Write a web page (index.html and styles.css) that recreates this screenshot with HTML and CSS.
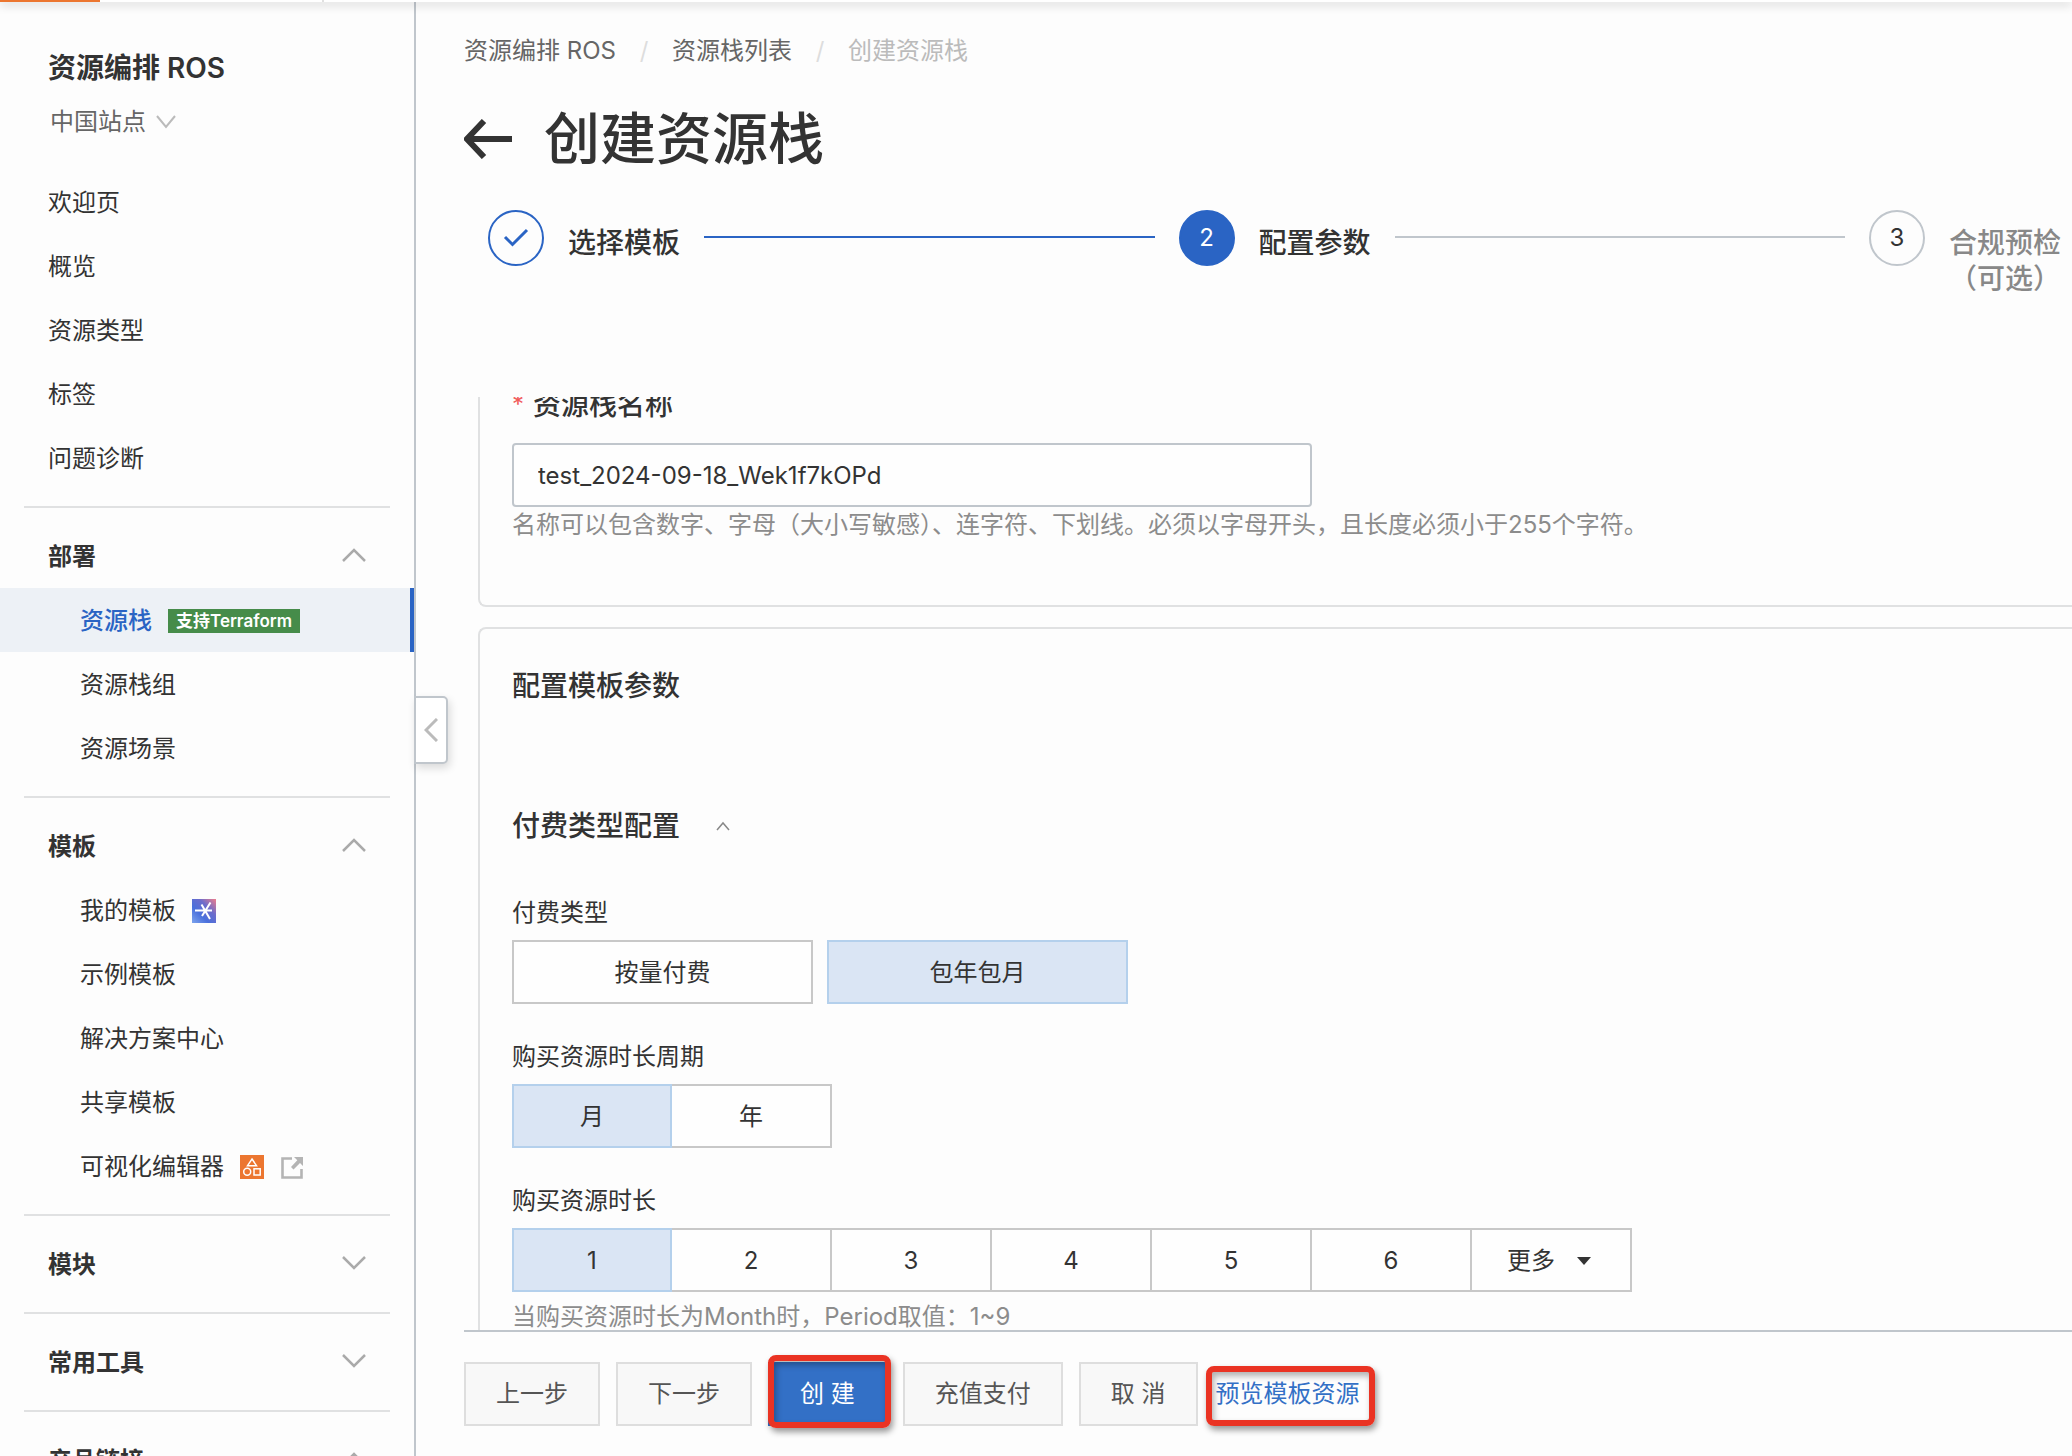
FILE: index.html
```html
<!DOCTYPE html>
<html lang="zh-CN">
<head>
<meta charset="utf-8">
<title>创建资源栈 - 资源编排 ROS</title>
<meta name="viewport" content="width=device-width, initial-scale=1">
<link rel="stylesheet" href="styles.css">
</head>
<body>
<div class="topbar"><span class="topbar-brand"></span><span class="topbar-divider"></span></div>
<div class="shell">
  <aside class="sidebar">
    <h2 class="product">资源编排 ROS</h2>
    <button class="site" type="button">中国站点
      <svg width="20" height="14" viewBox="0 0 20 14"><path d="M1 1L10 12L19 1"/></svg>
    </button>
    <nav class="menu">
      <ul class="group">
        <li><a class="item" href="#">欢迎页</a></li>
        <li><a class="item" href="#">概览</a></li>
        <li><a class="item" href="#">资源类型</a></li>
        <li><a class="item" href="#">标签</a></li>
        <li><a class="item" href="#">问题诊断</a></li>
      </ul>
      <section class="group">
        <button class="item group-title" type="button">部署
          <svg class="chevron" width="24" height="14" viewBox="0 0 24 14"><path d="M1 13L12 2L23 13"/></svg>
        </button>
        <ul>
          <li><a class="item sub active" href="#" aria-current="page">资源栈<span class="badge">支持Terraform</span></a></li>
          <li><a class="item sub" href="#">资源栈组</a></li>
          <li><a class="item sub" href="#">资源场景</a></li>
        </ul>
      </section>
      <section class="group">
        <button class="item group-title" type="button">模板
          <svg class="chevron" width="24" height="14" viewBox="0 0 24 14"><path d="M1 13L12 2L23 13"/></svg>
        </button>
        <ul>
          <li><a class="item sub" href="#">我的模板
            <svg width="24" height="24" viewBox="0 0 24 24">
              <defs>
                <linearGradient id="spark" x1="0" y1="1" x2="1" y2="0">
                  <stop offset="0" stop-color="#7da4ee"/><stop offset=".35" stop-color="#4a70dc"/><stop offset=".65" stop-color="#6d6ccb"/><stop offset="1" stop-color="#ef7d8c"/>
                </linearGradient>
              </defs>
              <rect width="24" height="24" fill="url(#spark)"/>
              <path d="M3 11.500H20M9.500 5.500L18 20M18.500 3.500L10 17" fill="none" stroke="#fff" stroke-width="2"/>
            </svg></a></li>
          <li><a class="item sub" href="#">示例模板</a></li>
          <li><a class="item sub" href="#">解决方案中心</a></li>
          <li><a class="item sub" href="#">共享模板</a></li>
          <li><a class="item sub" href="#">可视化编辑器
            <svg width="24" height="24" viewBox="0 0 24 24">
              <rect width="24" height="24" fill="#ec7630"/>
              <g fill="none" stroke="#fff" stroke-width="1.500"><path d="M12 4L16.500 10.700H7.500Z"/><circle cx="7.200" cy="16.800" r="3.500"/><rect x="14" y="13.800" width="6.200" height="6.200"/></g>
            </svg>
            <svg width="24" height="24" viewBox="0 0 24 24">
              <path d="M12 3.500H2.500V22.500H21.500V14" fill="none" stroke="#b4b4b4" stroke-width="2.600"/>
              <path d="M14 2H23V11L20 8L13.500 14.500L11 12L17.300 5.300Z" fill="#b4b4b4"/>
            </svg></a></li>
        </ul>
      </section>
      <section class="group">
        <button class="item group-title" type="button">模块
          <svg class="chevron" width="24" height="14" viewBox="0 0 24 14"><path d="M1 1L12 12L23 1"/></svg>
        </button>
      </section>
      <section class="group">
        <button class="item group-title" type="button">常用工具
          <svg class="chevron" width="24" height="14" viewBox="0 0 24 14"><path d="M1 1L12 12L23 1"/></svg>
        </button>
      </section>
      <section class="group">
        <button class="item group-title" type="button">产品链接
          <svg class="chevron" width="24" height="14" viewBox="0 0 24 14"><path d="M1 13L12 2L23 13"/></svg>
        </button>
      </section>
    </nav>
  </aside>
  <button class="collapse" type="button" aria-label="收起">
    <svg width="14" height="24" viewBox="0 0 14 24"><path d="M13 1L2 12L13 23"/></svg>
  </button>

  <main class="main">
    <nav class="crumbs">
      <a href="#">资源编排 ROS</a><span class="slash">/</span><a href="#">资源栈列表</a><span class="slash">/</span><span class="here">创建资源栈</span>
    </nav>
    <header class="title">
      <a class="back" href="#" aria-label="返回">
        <svg width="50" height="40" viewBox="0 0 50 40"><path d="M20 2L3 20L20 38M3 20H48"/></svg>
      </a>
      <h1>创建资源栈</h1>
    </header>
    <ol class="steps">
      <li class="step done">
        <span class="dot"><svg width="26" height="20" viewBox="0 0 26 20"><path d="M2 9L9.500 16.500L24 2"/></svg></span>
        <span class="step-label">选择模板</span>
      </li>
      <li class="step current"><span class="dot">2</span><span class="step-label">配置参数</span></li>
      <li class="step"><span class="dot">3</span><span class="step-label">合规预检<br>（可选）</span></li>
    </ol>

    <form class="form">
      <div class="scroll">
        <section class="card name-card">
          <label class="heading name-label" for="stack-name"><span class="required">*</span>资源栈名称</label>
          <input class="text" id="stack-name" type="text" value="test_2024-09-18_Wek1f7kOPd">
          <p class="help">名称可以包含数字、字母（大小写敏感）、连字符、下划线。必须以字母开头，且长度必须小于255个字符。</p>
        </section>
        <section class="card params-card">
          <h2 class="heading">配置模板参数</h2>
          <h3 class="heading section-heading">付费类型配置
            <svg width="14" height="10" viewBox="0 0 14 10"><path d="M1 9L7 2L13 9"/></svg>
          </h3>
          <div class="field" role="group" aria-labelledby="pay">
            <span class="field-label" id="pay">付费类型</span>
            <div class="choices spaced">
              <button type="button" aria-pressed="false">按量付费</button>
              <button type="button" aria-pressed="true">包年包月</button>
            </div>
          </div>
          <div class="field" role="group" aria-labelledby="unit">
            <span class="field-label" id="unit">购买资源时长周期</span>
            <div class="choices">
              <button type="button" aria-pressed="true">月</button>
              <button type="button" aria-pressed="false">年</button>
            </div>
          </div>
          <div class="field" role="group" aria-labelledby="period">
            <span class="field-label" id="period">购买资源时长</span>
            <div class="choices">
              <button type="button" aria-pressed="true">1</button>
              <button type="button" aria-pressed="false">2</button>
              <button type="button" aria-pressed="false">3</button>
              <button type="button" aria-pressed="false">4</button>
              <button type="button" aria-pressed="false">5</button>
              <button type="button" aria-pressed="false">6</button>
              <button class="more" type="button" aria-haspopup="true">更多<svg width="14" height="8" viewBox="0 0 14 8"><path d="M0 0H14L7 8Z" fill="#333"/></svg></button>
            </div>
            <p class="help">当购买资源时长为Month时，Period取值：1~9</p>
          </div>
        </section>
      </div>
      <footer class="actions">
        <button class="btn" type="button">上一步</button>
        <button class="btn" type="button">下一步</button>
        <span class="marked mark-create"><button class="btn primary" type="submit">创 建</button></span>
        <button class="btn" type="button">充值支付</button>
        <button class="btn" type="button">取 消</button>
        <span class="marked mark-link"><a class="btn link" href="#">预览模板资源</a></span>
      </footer>
    </form>
  </main>
</div>
</body>
</html>
```
FILE: styles.css
```css
:root {
  --text: #333;
  --muted: #8c8c8c;
  --blue: #2a64c4;
  --line: #e0e1e2;
  --edge: #c0c6cc;
  --page: #fdfdfd;
}

* { box-sizing: border-box; }

body {
  margin: 0;
  background: var(--page);
  color: var(--text);
  font: 24px/36px Inter, "Noto Sans CJK SC", sans-serif;
}

h1, h2, h3, p, ul, ol { margin: 0; padding: 0; }
ul, ol { list-style: none; }
a { color: inherit; text-decoration: none; }
button, input { font: inherit; color: inherit; margin: 0; border-radius: 0; }
button { cursor: pointer; }
svg { flex: none; display: block; }

/* Console bar: only its lower edge is on screen */
.topbar {
  position: absolute;
  inset: 0 0 auto;
  z-index: 2;
  display: flex;
  height: 2px;
  background: #fff;
  box-shadow: 0 2px 10px rgba(0, 0, 0, .4);
}
.topbar-brand { width: 100px; background: #ec7630; }
.topbar-divider { width: 2px; margin-left: 222px; background: #e0e0e0; }

.shell {
  position: relative;
  display: flex;
  height: 100vh;
  overflow: hidden;
}

/* Sidebar */
.sidebar {
  flex: none;
  width: 416px;
  padding-top: 50px;
  overflow: hidden;
  border-right: 2px solid var(--edge);
}
.product {
  padding-left: 48px;
  font-size: 28px;
  font-weight: 600;
  line-height: 36px;
}
.site {
  display: flex;
  align-items: center;
  gap: 10px;
  margin: 18px 0 30px 50px;
  padding: 0;
  border: 0;
  background: none;
  color: #666;
}
.site svg { fill: none; stroke: #bbb; stroke-width: 2; }
.group + .group::before {
  content: "";
  display: block;
  height: 2px;
  margin: 16px 24px;
  background: var(--line);
}
.item {
  display: flex;
  align-items: center;
  gap: 16px;
  width: 100%;
  height: 64px;
  padding: 2px 48px 0;
  border: 0;
  background: none;
}
.group-title { justify-content: space-between; font-weight: 600; }
.sub { padding-left: 80px; }
.active {
  background: #edf1f6;
  border-right: 4px solid var(--blue);
  color: var(--blue);
  font-weight: 500;
}
.chevron { margin-bottom: 4px; fill: none; stroke: #aaa; stroke-width: 2.500; }
.badge {
  padding: 0 8px;
  background: #468c4a;
  color: #fff;
  font-size: 17px;
  font-weight: 600;
  line-height: 24px;
}
.collapse {
  position: absolute;
  left: 414px;
  top: 696px;
  display: flex;
  align-items: center;
  justify-content: center;
  width: 34px;
  height: 68px;
  padding: 0;
  border: 2px solid var(--edge);
  border-radius: 0 5px 5px 0;
  background: #fff;
  box-shadow: 2px 4px 8px rgba(0, 0, 0, .14);
}
.collapse svg { fill: none; stroke: #bbb; stroke-width: 3; }

/* Main column */
.main {
  flex: 1;
  min-width: 0;
  display: flex;
  flex-direction: column;
  padding: 33px 0 0 48px;
}
.crumbs { display: flex; color: #666; }
.slash { width: 56px; text-align: center; color: #ddd; }
.here { color: #bbb; }
.title {
  display: flex;
  align-items: center;
  gap: 30px;
  margin-top: 38px;
}
.title h1 { font-size: 56px; font-weight: 500; line-height: 64px; }
.back svg { fill: none; stroke: var(--text); stroke-width: 6; }

.steps {
  display: flex;
  gap: 24px;
  margin: 39px 11px 0 24px;
}
.step { display: flex; gap: 24px; }
.step:not(:last-child) { flex: 1; }
.step:not(:last-child)::after {
  content: "";
  flex: 1;
  height: 2px;
  margin-top: 26px;
  background: var(--edge);
}
.step.done::after { background: var(--blue) !important; }
.dot {
  display: flex;
  align-items: center;
  justify-content: center;
  width: 56px;
  height: 56px;
  border: 2px solid var(--edge);
  border-radius: 50%;
}
.done .dot { border-color: var(--blue); }
.done svg { fill: none; stroke: var(--blue); stroke-width: 3; }
.current .dot { border-color: var(--blue); background: var(--blue); color: #fff; }
.step-label {
  width: 112px;
  padding-top: 15px;
  font-size: 28px;
  font-weight: 500;
  text-align: center;
}
.step:last-child .step-label { color: #888; }

/* Form */
.form {
  flex: 1;
  min-height: 0;
  display: flex;
  flex-direction: column;
  margin-top: 100px;
}
.scroll { flex: 1; min-height: 0; overflow: hidden; padding-left: 14px; }
.card {
  padding: 32px;
  border: 2px solid var(--line);
  border-right: 0;
  border-radius: 8px 0 0 8px;
}
/* The form is scrolled a little way past the top of the first card */
.name-card { margin-top: -44px; padding-bottom: 62px; }
.params-card { margin-top: 20px; padding-top: 39px; }
.heading { font-size: 28px; font-weight: 500; line-height: 36px; }
.name-label { display: flex; gap: 9px; }
.required { color: #f15b5b; font-size: 24px; font-weight: 400; }
.text {
  display: block;
  width: 800px;
  max-width: 100%;
  height: 64px;
  margin-top: 20px;
  padding: 0 24px;
  border: 2px solid var(--edge);
  border-radius: 4px;
  background: #fefefe;
}
.help { color: var(--muted); }
.section-heading {
  display: flex;
  align-items: center;
  gap: 36px;
  margin: 104px 0 51px;
}
.section-heading svg { fill: none; stroke: #888; stroke-width: 1.500; }
.field + .field { margin-top: 35px; }
.field .help { margin-top: 7px; }
.field-label { display: block; }
.choices { display: flex; margin-top: 9px; }
.choices button {
  display: flex;
  align-items: center;
  justify-content: center;
  gap: 22px;
  width: 162px;
  height: 64px;
  margin-left: -2px;
  padding: 1px 0 0;
  border: 2px solid #c8c8c8;
  background: #fefefe;
}
.choices button:first-child { width: 160px; margin-left: 0; }
.choices .more { padding-right: 4px; }
.choices.spaced { gap: 14px; }
.choices.spaced button { width: 301px; margin-left: 0; }
.choices button[aria-pressed="true"] {
  position: relative;
  border-color: #b4d0ec;
  background: #dae5f4;
}

/* Footer */
.actions {
  display: flex;
  gap: 16px;
  padding: 30px 0;
  border-top: 2px solid var(--edge);
}
.btn {
  display: block;
  height: 64px;
  padding: 0 30px;
  border: 2px solid #dedede;
  background: #f8f8f8;
  color: #555;
  line-height: 60px;
  white-space: nowrap;
}
.primary { border-color: #3370c6; background: #3370c6; color: #fff; }
.link { padding: 0; border-color: transparent; background: none; color: #3370c6; }

/* Red call-outs drawn over the buttons */
.marked { position: relative; }
.marked::after {
  content: "";
  position: absolute;
  border: 6px solid #ea3323;
  border-radius: 8px;
  box-shadow: 2px 4px 6px rgba(0, 0, 0, .4), inset 2px 4px 6px rgba(0, 0, 0, .3);
  pointer-events: none;
}
.mark-create::after { inset: -7px -4px -2px 0; }
.mark-link::after { inset: 4px -13px 0 -8px; }
```
